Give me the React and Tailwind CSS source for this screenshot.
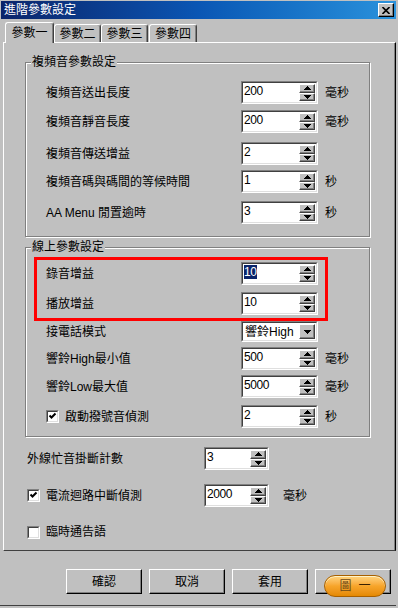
import React from 'react';

const FONT = "font-['Liberation_Sans','Noto_Sans_CJK_TC',sans-serif]";

function Arrow({ down }) {
  return (
    <svg width="7" height="4" viewBox="0 0 7 4" className="block" shapeRendering="crispEdges">
      <polygon points={down ? '0,0 7,0 3.5,4' : '3.5,0 7,4 0,4'} fill="#000" />
    </svg>
  );
}

function SpinButtons() {
  return (
    <div className="my-[1px] mr-[1px] flex w-[16px] flex-col">
      {[false, true].map((down) => (
        <div
          key={String(down)}
          className="flex flex-1 items-center justify-center border border-t-white border-l-white border-r-[#404040] border-b-[#404040] bg-[#c0c0c0] shadow-[inset_-1px_-1px_0_#808080]"
        >
          <Arrow down={down} />
        </div>
      ))}
    </div>
  );
}

function Field({ className = '', children }) {
  return (
    <div className={`flex border border-t-[#808080] border-l-[#808080] border-r-white border-b-white ${className}`}>
      <div className="flex min-w-0 flex-1 border border-t-[#404040] border-l-[#404040] border-r-[#dfdfdf] border-b-[#dfdfdf] bg-white">
        {children}
      </div>
    </div>
  );
}

function Spin({ value, className = 'w-[77px]', selected }) {
  return (
    <Field className={`h-[23px] ${className}`}>
      <div className="flex-1 pl-[1px] pt-[2px] text-[12px] leading-[13px] tracking-[-0.4px]">
        <span className={selected ? 'bg-[#0a246a] text-white' : ''}>{value}</span>
      </div>
      <SpinButtons />
    </Field>
  );
}

function Combo({ value }) {
  return (
    <Field className="h-[21px] w-[77px]">
      <div className="flex-1 pl-[2px] pt-[2px] text-[12px] leading-[14px]">{value}</div>
      <div className="my-[1px] mr-[1px] flex w-[16px] items-center justify-center border border-t-white border-l-white border-r-[#404040] border-b-[#404040] bg-[#c0c0c0] shadow-[inset_-1px_-1px_0_#808080]">
        <Arrow down />
      </div>
    </Field>
  );
}

function Check({ checked }) {
  return (
    <Field className="h-[13px] w-[13px] shrink-0">
      {checked && (
        <svg width="9" height="9" viewBox="0 0 9 9" className="block">
          <path d="M1.5 3.5 L3.5 5.5 L7.5 1.5" stroke="#000" strokeWidth="2" fill="none" />
        </svg>
      )}
    </Field>
  );
}

function Row({ label, unit, children, className = '' }) {
  return (
    <div className={`flex items-center ${className}`}>
      <div className="w-[195px] shrink-0 leading-[14px]">{label}</div>
      {children}
      {unit && <span className="ml-[7px] leading-[14px]">{unit}</span>}
    </div>
  );
}

function Group({ title, className = '', children }) {
  return (
    <fieldset
      className={`ml-[21px] w-[345px] border border-[#808080] shadow-[inset_1px_1px_0_#fff,1px_1px_0_#fff] ${className}`}
    >
      <legend className="ml-[5px] bg-[#c0c0c0] px-[1px] leading-[14px]">{title}</legend>
      {children}
    </fieldset>
  );
}

function Btn({ children }) {
  return (
    <div className="relative flex h-[25px] w-[76px] items-center justify-center border border-t-white border-l-white border-r-black border-b-black bg-[#c0c0c0] shadow-[inset_-1px_-1px_0_#808080]">
      {children}
    </div>
  );
}

const tabs = ['參數一', '參數二', '參數三', '參數四'];
const tabW = ['w-[49px]', 'w-[47px]', 'w-[47px]', 'w-[48px]'];

export default function App() {
  return (
    <div className={`h-[608px] w-[398px] overflow-hidden bg-[#c0c0c0] text-[12px] text-black ${FONT}`}>
      <div className="flex h-[606px] w-[396px] flex-col border-b border-[#404040] pl-[1px] pt-[1px]">
        {/* title bar */}
        <div className="flex h-[18px] items-center bg-linear-to-r from-[#0a246a] via-[#0a56b4] to-[#2a92dc] pl-[3px] pr-[2px]">
          <span className="flex-1 leading-[14px] text-white">進階參數設定</span>
          <div className="flex h-[14px] w-[16px] items-center justify-center border border-t-white border-l-white border-r-black border-b-black bg-[#c0c0c0] shadow-[inset_-1px_-1px_0_#808080]">
            <svg width="8" height="7" viewBox="0 0 8 7" className="block">
              <path d="M0.5 0 L7.5 7 M7.5 0 L0.5 7" stroke="#000" strokeWidth="1.6" />
            </svg>
          </div>
        </div>

        {/* tabs */}
        <div className="mt-[3px] flex h-[20px] items-end pl-[4px]">
          {tabs.map((t, i) => (
            <div
              key={t}
              className={`flex items-center justify-center rounded-t-[3px] border border-b-0 border-t-white border-l-white border-r-[#404040] bg-[#c0c0c0] shadow-[inset_-1px_0_0_#808080] leading-[14px] ${tabW[i]} ${
                i === 0 ? 'relative z-10 -mb-[1px] h-[21px]' : 'h-[18px]'
              } ${i === 2 ? 'mr-[1px]' : ''}`}
            >
              {t}
            </div>
          ))}
        </div>

        {/* panel */}
        <div className="ml-[2px] flex h-[509px] w-[393px] flex-col border border-t-white border-l-white border-r-black border-b-[#404040] shadow-[inset_-1px_0_0_#808080]">
          <Group title="複頻音參數設定" className="mt-[12px] pb-[12px]">
            <div className="pl-[20px]">
              <Row label="複頻音送出長度" unit="毫秒" className="mt-[12px]">
                <Spin value="200" />
              </Row>
              <Row label="複頻音靜音長度" unit="毫秒" className="mt-[6px]">
                <Spin value="200" />
              </Row>
              <Row label="複頻音傳送增益" className="mt-[9px]">
                <Spin value="2" />
              </Row>
              <Row label="複頻音碼與碼間的等候時間" unit="秒" className="mt-[5px]">
                <Spin value="1" />
              </Row>
              <Row label="AA Menu 閒置逾時" unit="秒" className="mt-[8px]">
                <Spin value="3" />
              </Row>
            </div>
          </Group>

          <Group title="線上參數設定" className="mt-[3px] pb-[8px]">
            <div className="ml-[8px] mt-[3px] w-[294px] border-[3px] border-[#ff0000] pb-[3px] pl-[9px] pt-[2px]">
              <Row label="錄音增益">
                <Spin value="10" selected />
              </Row>
              <Row label="播放增益" className="mt-[7px]">
                <Spin value="10" />
              </Row>
            </div>
            <div className="pl-[20px]">
              <Row label="接電話模式">
                <Combo value="響鈴High" />
              </Row>
              <Row label="響鈴High最小值" unit="毫秒" className="mt-[5px]">
                <Spin value="500" />
              </Row>
              <Row label="響鈴Low最大值" unit="毫秒" className="mt-[5px]">
                <Spin value="5000" />
              </Row>
              <Row
                label={
                  <span className="flex items-center gap-[6px]">
                    <Check checked />
                    <span>啟動撥號音偵測</span>
                  </span>
                }
                unit="秒"
                className="mt-[7px]"
              >
                <Spin value="2" />
              </Row>
            </div>
          </Group>

          <div className="pl-[23px]">
            <div className="mt-[10px] flex items-center">
              <div className="w-[177px] leading-[14px]">外線忙音掛斷計數</div>
              <Spin value="3" className="w-[65px]" />
            </div>
            <div className="mt-[14px] flex items-center">
              <div className="flex w-[177px] items-center gap-[6px] leading-[14px]">
                <Check checked />
                <span>電流迴路中斷偵測</span>
              </div>
              <Spin value="2000" className="w-[65px]" />
              <span className="ml-[14px] leading-[14px]">毫秒</span>
            </div>
            <div className="mt-[18px] flex items-center gap-[6px] leading-[14px]">
              <Check />
              <span>臨時通告語</span>
            </div>
          </div>
        </div>

        {/* buttons */}
        <div className="mt-[18px] flex gap-[7px] pl-[65px]">
          <Btn>確認</Btn>
          <Btn>取消</Btn>
          <Btn>套用</Btn>
          <Btn>
            <div className="absolute left-[8px] top-[5px] flex h-[22px] w-[62px] items-center justify-center gap-[7px] rounded-full border border-[#a86000] bg-linear-to-b from-[#ffd47c] via-[#f7a52a] to-[#e58900] shadow-[inset_0_1px_0_#fff3c8]">
              <span className="leading-[14px] text-[#6a4a18]">圖</span>
              <span className="leading-[14px] text-[#3a2000]">一</span>
            </div>
          </Btn>
        </div>
      </div>
    </div>
  );
}
